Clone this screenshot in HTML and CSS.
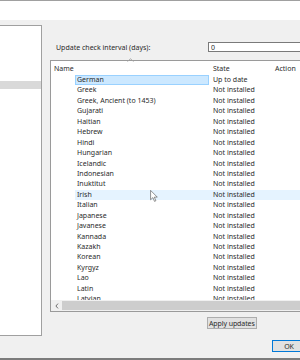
FILE: index.html
```html
<!DOCTYPE html>
<html lang="en">
<head>
    <meta charset="UTF-8">
    <meta name="viewport" content="width=device-width, initial-scale=1.0">
    <title>Options - Language Data</title>
    <link rel="stylesheet" href="styles.css">
</head>
<body>
    <div class="window">
        <div class="titlebar"></div>

        <div class="dialog">
            <div class="nav">
                <div class="nav-item selected"></div>
            </div>

            <div class="main">
                <div class="setting">
                    <label for="interval">Update check interval (days):</label>
                    <input type="text" id="interval" value="0">
                </div>

                <div class="listview">
                    <div class="list-header">
                        <div class="col-name">
                            Name
                            <svg class="sort-arrow" width="7" height="4" viewBox="0 0 7 4">
                                <polyline points="0.5,3.5 3.5,0.8 6.5,3.5" fill="none" stroke="#a0a0a0" stroke-width="0.9"/>
                            </svg>
                        </div>
                        <div class="col-state">State</div>
                        <div class="col-action">Action</div>
                    </div>

                    <div class="list-body">
                        <div class="row selected"><span class="name">German</span><span class="state">Up to date</span><span class="action"></span></div>
                        <div class="row"><span class="name">Greek</span><span class="state">Not installed</span><span class="action"></span></div>
                        <div class="row"><span class="name">Greek, Ancient (to 1453)</span><span class="state">Not installed</span><span class="action"></span></div>
                        <div class="row"><span class="name">Gujarati</span><span class="state">Not installed</span><span class="action"></span></div>
                        <div class="row"><span class="name">Haitian</span><span class="state">Not installed</span><span class="action"></span></div>
                        <div class="row"><span class="name">Hebrew</span><span class="state">Not installed</span><span class="action"></span></div>
                        <div class="row"><span class="name">Hindi</span><span class="state">Not installed</span><span class="action"></span></div>
                        <div class="row"><span class="name">Hungarian</span><span class="state">Not installed</span><span class="action"></span></div>
                        <div class="row"><span class="name">Icelandic</span><span class="state">Not installed</span><span class="action"></span></div>
                        <div class="row"><span class="name">Indonesian</span><span class="state">Not installed</span><span class="action"></span></div>
                        <div class="row"><span class="name">Inuktitut</span><span class="state">Not installed</span><span class="action"></span></div>
                        <div class="row hover"><span class="name">Irish</span><span class="state">Not installed</span><span class="action"></span></div>
                        <div class="row"><span class="name">Italian</span><span class="state">Not installed</span><span class="action"></span></div>
                        <div class="row"><span class="name">Japanese</span><span class="state">Not installed</span><span class="action"></span></div>
                        <div class="row"><span class="name">Javanese</span><span class="state">Not installed</span><span class="action"></span></div>
                        <div class="row"><span class="name">Kannada</span><span class="state">Not installed</span><span class="action"></span></div>
                        <div class="row"><span class="name">Kazakh</span><span class="state">Not installed</span><span class="action"></span></div>
                        <div class="row"><span class="name">Korean</span><span class="state">Not installed</span><span class="action"></span></div>
                        <div class="row"><span class="name">Kyrgyz</span><span class="state">Not installed</span><span class="action"></span></div>
                        <div class="row"><span class="name">Lao</span><span class="state">Not installed</span><span class="action"></span></div>
                        <div class="row"><span class="name">Latin</span><span class="state">Not installed</span><span class="action"></span></div>
                        <div class="row"><span class="name">Latvian</span><span class="state">Not installed</span><span class="action"></span></div>
                    </div>

                    <div class="hscroll">
                        <div class="hscroll-btn">
                            <svg width="4" height="6" viewBox="0 0 4 6">
                                <polyline points="3,0.6 0.9,3 3,5.4" fill="none" stroke="#606060" stroke-width="0.9"/>
                            </svg>
                        </div>
                        <div class="hscroll-thumb"></div>
                    </div>
                </div>

                <div class="apply-row">
                    <button class="btn">Apply updates</button>
                </div>

                <div class="ok-row">
                    <button class="btn default">OK</button>
                </div>
            </div>
        </div>

        <div class="bottom-edge"></div>
    </div>

    <!-- mouse pointer over the Irish row -->
    <svg class="cursor" width="8" height="12" viewBox="0 0 12 19">
        <path d="M0.6 0.6 L0.6 15.5 L4.2 12 L6.8 18 L9 17 L6.5 11.3 L11.2 11.3 Z" fill="#fff" stroke="#555" stroke-width="1"/>
    </svg>
</body>
</html>
```

FILE: styles.css
```css
html, body {
    margin: 0;
    padding: 0;
}
body {
    width: 300px;
    height: 360px;
    overflow: hidden;
    position: relative;
    font-family: "Noto Sans", "Open Sans", sans-serif;
    font-size: 7px;
    color: #2a2a2a;
    background-color: #f0f0f0;
}
.window {
    display: flex;
    flex-direction: column;
    height: 360px;
    border-top: 1px solid #a0a0a0;
    box-sizing: border-box;
}
.titlebar {
    height: 19px;
    background-color: #fff;
}
.dialog {
    flex: 1;
    display: flex;
    background-color: #f0f0f0;
}
.bottom-edge {
    height: 2px;
    background-color: #7c7c7c;
}

/* left tree panel */
.nav {
    flex-shrink: 0;
    width: 42px;
    height: 311px;
    margin-top: 5px;
    padding-top: 55px;
    box-sizing: border-box;
    background-color: #fff;
    border-top: 1px solid #a0a0a0;
    border-right: 1px solid #a0a0a0;
    border-bottom: 1px solid #a0a0a0;
}
.nav-item {
    height: 8px;
}
.nav-item.selected {
    background-color: #d9d9d9;
}

.main {
    flex-shrink: 0;
    margin-left: 8px;
    display: flex;
    flex-direction: column;
}

/* interval setting */
.setting {
    display: flex;
    align-items: center;
    margin-top: 22px;
    height: 10px;
}
.setting label {
    width: 158px;
    padding-left: 6px;
    box-sizing: border-box;
}
.setting input {
    width: 100px;
    height: 10px;
    box-sizing: border-box;
    margin: 0;
    padding: 0 2px;
    border: 1px solid #7a7a7a;
    background-color: #fff;
    font-family: inherit;
    font-size: 7px;
    color: #2a2a2a;
    outline: none;
}

/* language list */
.listview {
    margin-top: 8px;
    width: 262px;
    height: 252px;
    display: flex;
    flex-direction: column;
    background-color: #fff;
    border: 1px solid #9a9a9a;
    box-sizing: border-box;
}
.list-header {
    height: 14px;
    display: flex;
    align-items: center;
    flex-shrink: 0;
}
.col-name {
    position: relative;
    width: 158px;
    padding-left: 3px;
    box-sizing: border-box;
}
.sort-arrow {
    position: absolute;
    left: 76px;
    top: -6px;
}
.col-state {
    width: 62px;
    padding-left: 4px;
    box-sizing: border-box;
}
.col-action {
    padding-left: 4px;
}
.list-body {
    flex: 1;
    overflow: hidden;
}
.row {
    display: flex;
    height: 10.45px;
    line-height: 10.45px;
    margin-left: 24px;
    white-space: nowrap;
}
.row .name {
    width: 134px;
    padding-left: 2px;
    box-sizing: border-box;
}
.row .state {
    width: 62px;
    padding-left: 4px;
    box-sizing: border-box;
}
.row.selected .name {
    background-color: #cce8ff;
    border: 1px solid #99d1ff;
    padding-left: 1px;
    line-height: 8.45px;
}
.row.hover {
    background-color: #e5f3ff;
}
.hscroll {
    height: 11px;
    flex-shrink: 0;
    display: flex;
    background-color: #f0f0f0;
}
.hscroll-btn {
    width: 11px;
    display: flex;
    align-items: center;
    justify-content: center;
}
.hscroll-thumb {
    flex: 1;
    margin: 1px 0;
    background-color: #cdcdcd;
}

/* buttons */
.apply-row {
    margin-top: 5px;
    padding-left: 157px;
}
.ok-row {
    margin-top: 11px;
    padding-left: 222px;
}
.btn {
    height: 12px;
    margin: 0;
    padding: 0 1px;
    font-family: inherit;
    font-size: 7px;
    letter-spacing: -0.1px;
    color: #2a2a2a;
    background-color: #e1e1e1;
    border: 1px solid #adadad;
    border-radius: 0;
}
.btn.default {
    width: 34px;
    border-color: #0078d7;
}

.cursor {
    position: absolute;
    left: 150px;
    top: 190px;
}
```
